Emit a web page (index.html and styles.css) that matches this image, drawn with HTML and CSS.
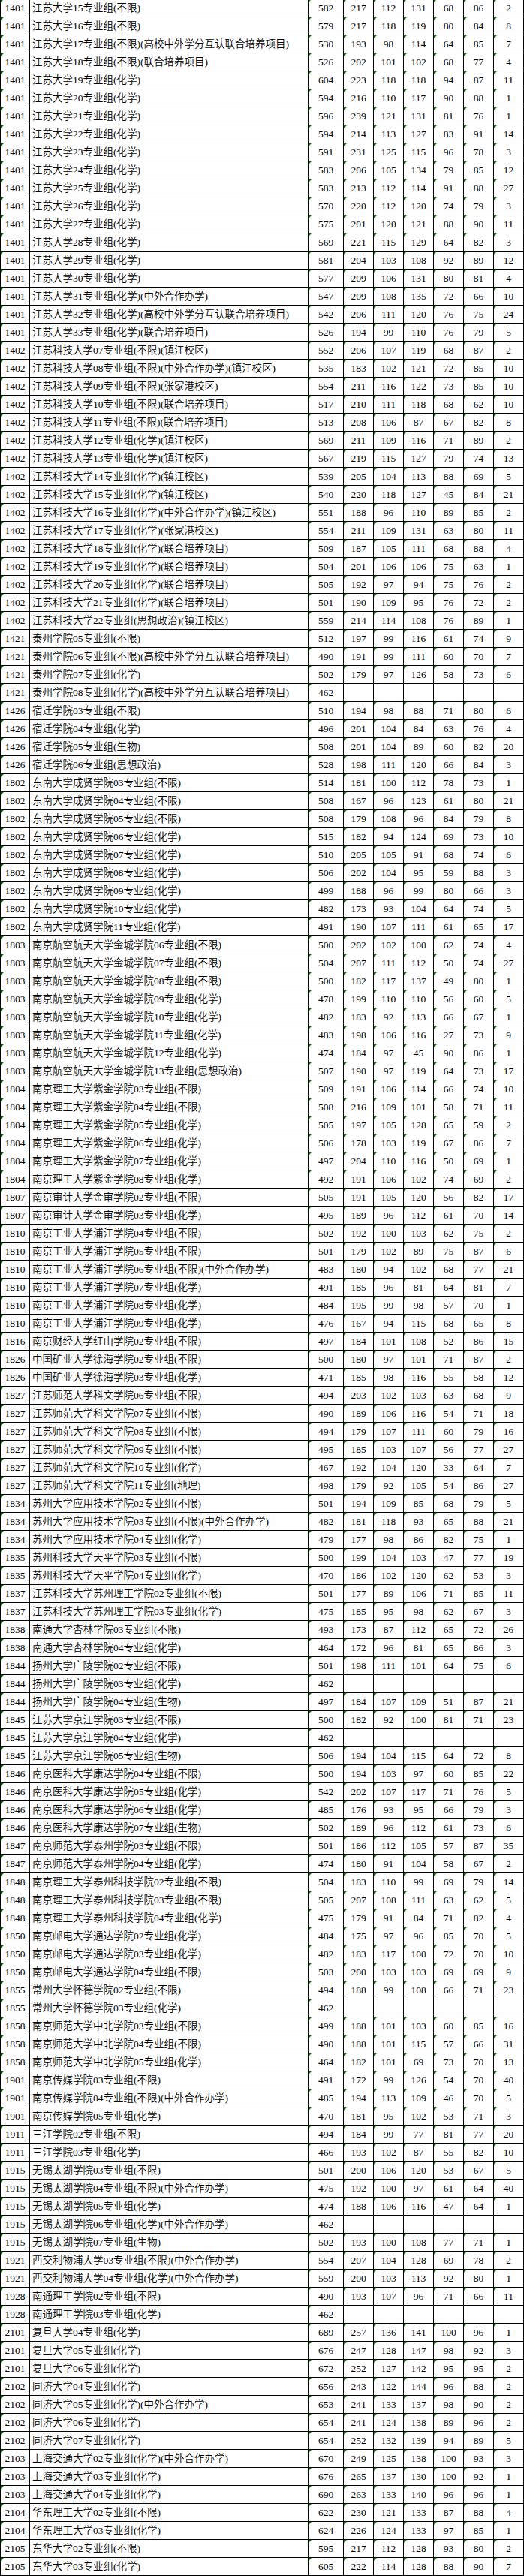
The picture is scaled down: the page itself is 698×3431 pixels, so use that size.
FILE: index.html
```html
<!DOCTYPE html>
<html lang="zh-CN">
<head>
<meta charset="utf-8">
<title>专业组投档线</title>
<link rel="stylesheet" href="styles.css">
</head>
<body>
<div class="sheet">
<div class="r"><span class="n">1401</span><span class="m">江苏大学15专业组(不限)</span><span class="n">582</span><span class="n">217</span><span class="n">112</span><span class="n">131</span><span class="n">68</span><span class="n">86</span><span class="n">2</span></div>
<div class="r"><span class="n">1401</span><span class="m">江苏大学16专业组(不限)</span><span class="n">579</span><span class="n">217</span><span class="n">118</span><span class="n">119</span><span class="n">80</span><span class="n">84</span><span class="n">8</span></div>
<div class="r"><span class="n">1401</span><span class="m">江苏大学17专业组(不限)(高校中外学分互认联合培养项目)</span><span class="n">530</span><span class="n">193</span><span class="n">98</span><span class="n">114</span><span class="n">64</span><span class="n">85</span><span class="n">7</span></div>
<div class="r"><span class="n">1401</span><span class="m">江苏大学18专业组(不限)(联合培养项目)</span><span class="n">526</span><span class="n">202</span><span class="n">101</span><span class="n">102</span><span class="n">68</span><span class="n">77</span><span class="n">4</span></div>
<div class="r"><span class="n">1401</span><span class="m">江苏大学19专业组(化学)</span><span class="n">604</span><span class="n">223</span><span class="n">118</span><span class="n">118</span><span class="n">94</span><span class="n">87</span><span class="n">11</span></div>
<div class="r"><span class="n">1401</span><span class="m">江苏大学20专业组(化学)</span><span class="n">594</span><span class="n">216</span><span class="n">110</span><span class="n">117</span><span class="n">90</span><span class="n">88</span><span class="n">1</span></div>
<div class="r"><span class="n">1401</span><span class="m">江苏大学21专业组(化学)</span><span class="n">596</span><span class="n">239</span><span class="n">121</span><span class="n">131</span><span class="n">81</span><span class="n">76</span><span class="n">1</span></div>
<div class="r"><span class="n">1401</span><span class="m">江苏大学22专业组(化学)</span><span class="n">594</span><span class="n">214</span><span class="n">113</span><span class="n">127</span><span class="n">83</span><span class="n">91</span><span class="n">14</span></div>
<div class="r"><span class="n">1401</span><span class="m">江苏大学23专业组(化学)</span><span class="n">591</span><span class="n">231</span><span class="n">125</span><span class="n">115</span><span class="n">96</span><span class="n">78</span><span class="n">3</span></div>
<div class="r"><span class="n">1401</span><span class="m">江苏大学24专业组(化学)</span><span class="n">583</span><span class="n">206</span><span class="n">105</span><span class="n">134</span><span class="n">79</span><span class="n">85</span><span class="n">12</span></div>
<div class="r"><span class="n">1401</span><span class="m">江苏大学25专业组(化学)</span><span class="n">583</span><span class="n">213</span><span class="n">112</span><span class="n">114</span><span class="n">91</span><span class="n">88</span><span class="n">27</span></div>
<div class="r"><span class="n">1401</span><span class="m">江苏大学26专业组(化学)</span><span class="n">570</span><span class="n">220</span><span class="n">112</span><span class="n">120</span><span class="n">74</span><span class="n">79</span><span class="n">3</span></div>
<div class="r"><span class="n">1401</span><span class="m">江苏大学27专业组(化学)</span><span class="n">575</span><span class="n">201</span><span class="n">120</span><span class="n">121</span><span class="n">88</span><span class="n">90</span><span class="n">11</span></div>
<div class="r"><span class="n">1401</span><span class="m">江苏大学28专业组(化学)</span><span class="n">569</span><span class="n">221</span><span class="n">115</span><span class="n">129</span><span class="n">64</span><span class="n">82</span><span class="n">3</span></div>
<div class="r"><span class="n">1401</span><span class="m">江苏大学29专业组(化学)</span><span class="n">581</span><span class="n">204</span><span class="n">103</span><span class="n">108</span><span class="n">92</span><span class="n">89</span><span class="n">12</span></div>
<div class="r"><span class="n">1401</span><span class="m">江苏大学30专业组(化学)</span><span class="n">577</span><span class="n">209</span><span class="n">106</span><span class="n">131</span><span class="n">80</span><span class="n">81</span><span class="n">4</span></div>
<div class="r"><span class="n">1401</span><span class="m">江苏大学31专业组(化学)(中外合作办学)</span><span class="n">547</span><span class="n">209</span><span class="n">108</span><span class="n">135</span><span class="n">72</span><span class="n">66</span><span class="n">10</span></div>
<div class="r"><span class="n">1401</span><span class="m">江苏大学32专业组(化学)(高校中外学分互认联合培养项目)</span><span class="n">542</span><span class="n">206</span><span class="n">111</span><span class="n">120</span><span class="n">76</span><span class="n">75</span><span class="n">24</span></div>
<div class="r"><span class="n">1401</span><span class="m">江苏大学33专业组(化学)(联合培养项目)</span><span class="n">526</span><span class="n">194</span><span class="n">99</span><span class="n">110</span><span class="n">76</span><span class="n">79</span><span class="n">5</span></div>
<div class="r"><span class="n">1402</span><span class="m">江苏科技大学07专业组(不限)(镇江校区)</span><span class="n">552</span><span class="n">206</span><span class="n">107</span><span class="n">119</span><span class="n">68</span><span class="n">87</span><span class="n">2</span></div>
<div class="r"><span class="n">1402</span><span class="m">江苏科技大学08专业组(不限)(中外合作办学)(镇江校区)</span><span class="n">535</span><span class="n">183</span><span class="n">102</span><span class="n">121</span><span class="n">72</span><span class="n">85</span><span class="n">10</span></div>
<div class="r"><span class="n">1402</span><span class="m">江苏科技大学09专业组(不限)(张家港校区)</span><span class="n">554</span><span class="n">211</span><span class="n">116</span><span class="n">122</span><span class="n">73</span><span class="n">85</span><span class="n">10</span></div>
<div class="r"><span class="n">1402</span><span class="m">江苏科技大学10专业组(不限)(联合培养项目)</span><span class="n">517</span><span class="n">210</span><span class="n">111</span><span class="n">118</span><span class="n">68</span><span class="n">62</span><span class="n">10</span></div>
<div class="r"><span class="n">1402</span><span class="m">江苏科技大学11专业组(不限)(联合培养项目)</span><span class="n">513</span><span class="n">208</span><span class="n">106</span><span class="n">87</span><span class="n">67</span><span class="n">82</span><span class="n">8</span></div>
<div class="r"><span class="n">1402</span><span class="m">江苏科技大学12专业组(化学)(镇江校区)</span><span class="n">569</span><span class="n">211</span><span class="n">109</span><span class="n">116</span><span class="n">71</span><span class="n">89</span><span class="n">2</span></div>
<div class="r"><span class="n">1402</span><span class="m">江苏科技大学13专业组(化学)(镇江校区)</span><span class="n">567</span><span class="n">219</span><span class="n">115</span><span class="n">127</span><span class="n">79</span><span class="n">74</span><span class="n">13</span></div>
<div class="r"><span class="n">1402</span><span class="m">江苏科技大学14专业组(化学)(镇江校区)</span><span class="n">539</span><span class="n">205</span><span class="n">104</span><span class="n">113</span><span class="n">88</span><span class="n">69</span><span class="n">5</span></div>
<div class="r"><span class="n">1402</span><span class="m">江苏科技大学15专业组(化学)(镇江校区)</span><span class="n">540</span><span class="n">220</span><span class="n">118</span><span class="n">127</span><span class="n">45</span><span class="n">84</span><span class="n">21</span></div>
<div class="r"><span class="n">1402</span><span class="m">江苏科技大学16专业组(化学)(中外合作办学)(镇江校区)</span><span class="n">551</span><span class="n">188</span><span class="n">96</span><span class="n">110</span><span class="n">89</span><span class="n">85</span><span class="n">2</span></div>
<div class="r"><span class="n">1402</span><span class="m">江苏科技大学17专业组(化学)(张家港校区)</span><span class="n">554</span><span class="n">211</span><span class="n">109</span><span class="n">131</span><span class="n">63</span><span class="n">80</span><span class="n">11</span></div>
<div class="r"><span class="n">1402</span><span class="m">江苏科技大学18专业组(化学)(联合培养项目)</span><span class="n">509</span><span class="n">187</span><span class="n">105</span><span class="n">111</span><span class="n">68</span><span class="n">88</span><span class="n">4</span></div>
<div class="r"><span class="n">1402</span><span class="m">江苏科技大学19专业组(化学)(联合培养项目)</span><span class="n">504</span><span class="n">201</span><span class="n">106</span><span class="n">106</span><span class="n">75</span><span class="n">63</span><span class="n">1</span></div>
<div class="r"><span class="n">1402</span><span class="m">江苏科技大学20专业组(化学)(联合培养项目)</span><span class="n">505</span><span class="n">192</span><span class="n">97</span><span class="n">94</span><span class="n">75</span><span class="n">76</span><span class="n">2</span></div>
<div class="r"><span class="n">1402</span><span class="m">江苏科技大学21专业组(化学)(联合培养项目)</span><span class="n">501</span><span class="n">190</span><span class="n">109</span><span class="n">95</span><span class="n">76</span><span class="n">72</span><span class="n">2</span></div>
<div class="r"><span class="n">1402</span><span class="m">江苏科技大学22专业组(思想政治)(镇江校区)</span><span class="n">559</span><span class="n">214</span><span class="n">114</span><span class="n">108</span><span class="n">76</span><span class="n">89</span><span class="n">1</span></div>
<div class="r"><span class="n">1421</span><span class="m">泰州学院05专业组(不限)</span><span class="n">512</span><span class="n">197</span><span class="n">99</span><span class="n">116</span><span class="n">61</span><span class="n">74</span><span class="n">9</span></div>
<div class="r"><span class="n">1421</span><span class="m">泰州学院06专业组(不限)(高校中外学分互认联合培养项目)</span><span class="n">490</span><span class="n">191</span><span class="n">99</span><span class="n">111</span><span class="n">60</span><span class="n">70</span><span class="n">7</span></div>
<div class="r"><span class="n">1421</span><span class="m">泰州学院07专业组(化学)</span><span class="n">502</span><span class="n">179</span><span class="n">97</span><span class="n">126</span><span class="n">58</span><span class="n">73</span><span class="n">6</span></div>
<div class="r"><span class="n">1421</span><span class="m">泰州学院08专业组(化学)(高校中外学分互认联合培养项目)</span><span class="n">462</span><span></span><span></span><span></span><span></span><span></span><span></span></div>
<div class="r"><span class="n">1426</span><span class="m">宿迁学院03专业组(不限)</span><span class="n">510</span><span class="n">194</span><span class="n">98</span><span class="n">88</span><span class="n">71</span><span class="n">80</span><span class="n">6</span></div>
<div class="r"><span class="n">1426</span><span class="m">宿迁学院04专业组(化学)</span><span class="n">496</span><span class="n">201</span><span class="n">104</span><span class="n">84</span><span class="n">63</span><span class="n">76</span><span class="n">4</span></div>
<div class="r"><span class="n">1426</span><span class="m">宿迁学院05专业组(生物)</span><span class="n">508</span><span class="n">201</span><span class="n">104</span><span class="n">89</span><span class="n">60</span><span class="n">82</span><span class="n">20</span></div>
<div class="r"><span class="n">1426</span><span class="m">宿迁学院06专业组(思想政治)</span><span class="n">528</span><span class="n">198</span><span class="n">111</span><span class="n">120</span><span class="n">66</span><span class="n">84</span><span class="n">3</span></div>
<div class="r"><span class="n">1802</span><span class="m">东南大学成贤学院03专业组(不限)</span><span class="n">514</span><span class="n">181</span><span class="n">100</span><span class="n">112</span><span class="n">78</span><span class="n">73</span><span class="n">1</span></div>
<div class="r"><span class="n">1802</span><span class="m">东南大学成贤学院04专业组(不限)</span><span class="n">508</span><span class="n">167</span><span class="n">96</span><span class="n">123</span><span class="n">61</span><span class="n">80</span><span class="n">21</span></div>
<div class="r"><span class="n">1802</span><span class="m">东南大学成贤学院05专业组(不限)</span><span class="n">508</span><span class="n">179</span><span class="n">108</span><span class="n">96</span><span class="n">84</span><span class="n">79</span><span class="n">8</span></div>
<div class="r"><span class="n">1802</span><span class="m">东南大学成贤学院06专业组(化学)</span><span class="n">515</span><span class="n">182</span><span class="n">94</span><span class="n">124</span><span class="n">69</span><span class="n">73</span><span class="n">10</span></div>
<div class="r"><span class="n">1802</span><span class="m">东南大学成贤学院07专业组(化学)</span><span class="n">510</span><span class="n">205</span><span class="n">105</span><span class="n">91</span><span class="n">68</span><span class="n">74</span><span class="n">6</span></div>
<div class="r"><span class="n">1802</span><span class="m">东南大学成贤学院08专业组(化学)</span><span class="n">506</span><span class="n">202</span><span class="n">104</span><span class="n">95</span><span class="n">59</span><span class="n">88</span><span class="n">3</span></div>
<div class="r"><span class="n">1802</span><span class="m">东南大学成贤学院09专业组(化学)</span><span class="n">499</span><span class="n">188</span><span class="n">96</span><span class="n">99</span><span class="n">80</span><span class="n">66</span><span class="n">3</span></div>
<div class="r"><span class="n">1802</span><span class="m">东南大学成贤学院10专业组(化学)</span><span class="n">482</span><span class="n">173</span><span class="n">93</span><span class="n">104</span><span class="n">64</span><span class="n">74</span><span class="n">5</span></div>
<div class="r"><span class="n">1802</span><span class="m">东南大学成贤学院11专业组(化学)</span><span class="n">491</span><span class="n">190</span><span class="n">107</span><span class="n">111</span><span class="n">61</span><span class="n">65</span><span class="n">17</span></div>
<div class="r"><span class="n">1803</span><span class="m">南京航空航天大学金城学院06专业组(不限)</span><span class="n">500</span><span class="n">202</span><span class="n">102</span><span class="n">100</span><span class="n">62</span><span class="n">74</span><span class="n">4</span></div>
<div class="r"><span class="n">1803</span><span class="m">南京航空航天大学金城学院07专业组(不限)</span><span class="n">504</span><span class="n">207</span><span class="n">111</span><span class="n">112</span><span class="n">50</span><span class="n">74</span><span class="n">27</span></div>
<div class="r"><span class="n">1803</span><span class="m">南京航空航天大学金城学院08专业组(不限)</span><span class="n">500</span><span class="n">182</span><span class="n">117</span><span class="n">137</span><span class="n">49</span><span class="n">80</span><span class="n">1</span></div>
<div class="r"><span class="n">1803</span><span class="m">南京航空航天大学金城学院09专业组(化学)</span><span class="n">478</span><span class="n">199</span><span class="n">110</span><span class="n">110</span><span class="n">56</span><span class="n">60</span><span class="n">5</span></div>
<div class="r"><span class="n">1803</span><span class="m">南京航空航天大学金城学院10专业组(化学)</span><span class="n">482</span><span class="n">183</span><span class="n">92</span><span class="n">113</span><span class="n">66</span><span class="n">67</span><span class="n">1</span></div>
<div class="r"><span class="n">1803</span><span class="m">南京航空航天大学金城学院11专业组(化学)</span><span class="n">483</span><span class="n">198</span><span class="n">106</span><span class="n">116</span><span class="n">27</span><span class="n">73</span><span class="n">9</span></div>
<div class="r"><span class="n">1803</span><span class="m">南京航空航天大学金城学院12专业组(化学)</span><span class="n">474</span><span class="n">184</span><span class="n">97</span><span class="n">45</span><span class="n">90</span><span class="n">86</span><span class="n">1</span></div>
<div class="r"><span class="n">1803</span><span class="m">南京航空航天大学金城学院13专业组(思想政治)</span><span class="n">507</span><span class="n">190</span><span class="n">97</span><span class="n">119</span><span class="n">64</span><span class="n">73</span><span class="n">17</span></div>
<div class="r"><span class="n">1804</span><span class="m">南京理工大学紫金学院03专业组(不限)</span><span class="n">509</span><span class="n">191</span><span class="n">106</span><span class="n">114</span><span class="n">66</span><span class="n">74</span><span class="n">10</span></div>
<div class="r"><span class="n">1804</span><span class="m">南京理工大学紫金学院04专业组(不限)</span><span class="n">508</span><span class="n">216</span><span class="n">109</span><span class="n">101</span><span class="n">58</span><span class="n">71</span><span class="n">11</span></div>
<div class="r"><span class="n">1804</span><span class="m">南京理工大学紫金学院05专业组(化学)</span><span class="n">505</span><span class="n">197</span><span class="n">105</span><span class="n">128</span><span class="n">65</span><span class="n">59</span><span class="n">2</span></div>
<div class="r"><span class="n">1804</span><span class="m">南京理工大学紫金学院06专业组(化学)</span><span class="n">506</span><span class="n">178</span><span class="n">103</span><span class="n">119</span><span class="n">67</span><span class="n">86</span><span class="n">7</span></div>
<div class="r"><span class="n">1804</span><span class="m">南京理工大学紫金学院07专业组(化学)</span><span class="n">497</span><span class="n">204</span><span class="n">110</span><span class="n">116</span><span class="n">50</span><span class="n">69</span><span class="n">1</span></div>
<div class="r"><span class="n">1804</span><span class="m">南京理工大学紫金学院08专业组(化学)</span><span class="n">492</span><span class="n">191</span><span class="n">106</span><span class="n">102</span><span class="n">74</span><span class="n">69</span><span class="n">2</span></div>
<div class="r"><span class="n">1807</span><span class="m">南京审计大学金审学院02专业组(不限)</span><span class="n">505</span><span class="n">191</span><span class="n">105</span><span class="n">120</span><span class="n">56</span><span class="n">82</span><span class="n">17</span></div>
<div class="r"><span class="n">1807</span><span class="m">南京审计大学金审学院03专业组(化学)</span><span class="n">495</span><span class="n">189</span><span class="n">96</span><span class="n">112</span><span class="n">61</span><span class="n">70</span><span class="n">14</span></div>
<div class="r"><span class="n">1810</span><span class="m">南京工业大学浦江学院04专业组(不限)</span><span class="n">502</span><span class="n">192</span><span class="n">100</span><span class="n">103</span><span class="n">62</span><span class="n">75</span><span class="n">2</span></div>
<div class="r"><span class="n">1810</span><span class="m">南京工业大学浦江学院05专业组(不限)</span><span class="n">501</span><span class="n">179</span><span class="n">102</span><span class="n">89</span><span class="n">75</span><span class="n">87</span><span class="n">6</span></div>
<div class="r"><span class="n">1810</span><span class="m">南京工业大学浦江学院06专业组(不限)(中外合作办学)</span><span class="n">483</span><span class="n">180</span><span class="n">94</span><span class="n">102</span><span class="n">68</span><span class="n">77</span><span class="n">21</span></div>
<div class="r"><span class="n">1810</span><span class="m">南京工业大学浦江学院07专业组(化学)</span><span class="n">491</span><span class="n">185</span><span class="n">96</span><span class="n">81</span><span class="n">64</span><span class="n">81</span><span class="n">7</span></div>
<div class="r"><span class="n">1810</span><span class="m">南京工业大学浦江学院08专业组(化学)</span><span class="n">484</span><span class="n">195</span><span class="n">99</span><span class="n">98</span><span class="n">57</span><span class="n">70</span><span class="n">1</span></div>
<div class="r"><span class="n">1810</span><span class="m">南京工业大学浦江学院09专业组(化学)</span><span class="n">476</span><span class="n">167</span><span class="n">94</span><span class="n">115</span><span class="n">68</span><span class="n">65</span><span class="n">8</span></div>
<div class="r"><span class="n">1816</span><span class="m">南京财经大学红山学院02专业组(不限)</span><span class="n">497</span><span class="n">184</span><span class="n">101</span><span class="n">108</span><span class="n">52</span><span class="n">86</span><span class="n">15</span></div>
<div class="r"><span class="n">1826</span><span class="m">中国矿业大学徐海学院02专业组(不限)</span><span class="n">500</span><span class="n">180</span><span class="n">97</span><span class="n">101</span><span class="n">71</span><span class="n">87</span><span class="n">2</span></div>
<div class="r"><span class="n">1826</span><span class="m">中国矿业大学徐海学院03专业组(化学)</span><span class="n">471</span><span class="n">185</span><span class="n">98</span><span class="n">116</span><span class="n">55</span><span class="n">58</span><span class="n">12</span></div>
<div class="r"><span class="n">1827</span><span class="m">江苏师范大学科文学院06专业组(不限)</span><span class="n">494</span><span class="n">203</span><span class="n">102</span><span class="n">103</span><span class="n">63</span><span class="n">68</span><span class="n">9</span></div>
<div class="r"><span class="n">1827</span><span class="m">江苏师范大学科文学院07专业组(不限)</span><span class="n">490</span><span class="n">189</span><span class="n">106</span><span class="n">116</span><span class="n">54</span><span class="n">71</span><span class="n">18</span></div>
<div class="r"><span class="n">1827</span><span class="m">江苏师范大学科文学院08专业组(不限)</span><span class="n">494</span><span class="n">179</span><span class="n">107</span><span class="n">111</span><span class="n">60</span><span class="n">79</span><span class="n">16</span></div>
<div class="r"><span class="n">1827</span><span class="m">江苏师范大学科文学院09专业组(不限)</span><span class="n">495</span><span class="n">185</span><span class="n">103</span><span class="n">107</span><span class="n">56</span><span class="n">77</span><span class="n">27</span></div>
<div class="r"><span class="n">1827</span><span class="m">江苏师范大学科文学院10专业组(化学)</span><span class="n">467</span><span class="n">192</span><span class="n">104</span><span class="n">120</span><span class="n">33</span><span class="n">64</span><span class="n">7</span></div>
<div class="r"><span class="n">1827</span><span class="m">江苏师范大学科文学院11专业组(地理)</span><span class="n">498</span><span class="n">179</span><span class="n">92</span><span class="n">105</span><span class="n">54</span><span class="n">86</span><span class="n">27</span></div>
<div class="r"><span class="n">1834</span><span class="m">苏州大学应用技术学院02专业组(不限)</span><span class="n">501</span><span class="n">194</span><span class="n">109</span><span class="n">85</span><span class="n">68</span><span class="n">79</span><span class="n">5</span></div>
<div class="r"><span class="n">1834</span><span class="m">苏州大学应用技术学院03专业组(不限)(中外合作办学)</span><span class="n">482</span><span class="n">181</span><span class="n">118</span><span class="n">93</span><span class="n">65</span><span class="n">88</span><span class="n">21</span></div>
<div class="r"><span class="n">1834</span><span class="m">苏州大学应用技术学院04专业组(化学)</span><span class="n">479</span><span class="n">177</span><span class="n">98</span><span class="n">86</span><span class="n">82</span><span class="n">75</span><span class="n">1</span></div>
<div class="r"><span class="n">1835</span><span class="m">苏州科技大学天平学院03专业组(不限)</span><span class="n">500</span><span class="n">199</span><span class="n">104</span><span class="n">103</span><span class="n">47</span><span class="n">77</span><span class="n">19</span></div>
<div class="r"><span class="n">1835</span><span class="m">苏州科技大学天平学院04专业组(化学)</span><span class="n">470</span><span class="n">186</span><span class="n">102</span><span class="n">120</span><span class="n">62</span><span class="n">53</span><span class="n">3</span></div>
<div class="r"><span class="n">1837</span><span class="m">江苏科技大学苏州理工学院02专业组(不限)</span><span class="n">501</span><span class="n">177</span><span class="n">89</span><span class="n">106</span><span class="n">71</span><span class="n">85</span><span class="n">11</span></div>
<div class="r"><span class="n">1837</span><span class="m">江苏科技大学苏州理工学院03专业组(化学)</span><span class="n">475</span><span class="n">185</span><span class="n">95</span><span class="n">98</span><span class="n">62</span><span class="n">67</span><span class="n">3</span></div>
<div class="r"><span class="n">1838</span><span class="m">南通大学杏林学院03专业组(不限)</span><span class="n">493</span><span class="n">173</span><span class="n">87</span><span class="n">112</span><span class="n">65</span><span class="n">72</span><span class="n">26</span></div>
<div class="r"><span class="n">1838</span><span class="m">南通大学杏林学院04专业组(化学)</span><span class="n">464</span><span class="n">172</span><span class="n">96</span><span class="n">81</span><span class="n">65</span><span class="n">86</span><span class="n">3</span></div>
<div class="r"><span class="n">1844</span><span class="m">扬州大学广陵学院02专业组(不限)</span><span class="n">501</span><span class="n">198</span><span class="n">111</span><span class="n">101</span><span class="n">64</span><span class="n">75</span><span class="n">6</span></div>
<div class="r"><span class="n">1844</span><span class="m">扬州大学广陵学院03专业组(化学)</span><span class="n">462</span><span></span><span></span><span></span><span></span><span></span><span></span></div>
<div class="r"><span class="n">1844</span><span class="m">扬州大学广陵学院04专业组(生物)</span><span class="n">497</span><span class="n">184</span><span class="n">107</span><span class="n">109</span><span class="n">51</span><span class="n">87</span><span class="n">21</span></div>
<div class="r"><span class="n">1845</span><span class="m">江苏大学京江学院03专业组(不限)</span><span class="n">500</span><span class="n">182</span><span class="n">92</span><span class="n">100</span><span class="n">81</span><span class="n">71</span><span class="n">23</span></div>
<div class="r"><span class="n">1845</span><span class="m">江苏大学京江学院04专业组(化学)</span><span class="n">462</span><span></span><span></span><span></span><span></span><span></span><span></span></div>
<div class="r"><span class="n">1845</span><span class="m">江苏大学京江学院05专业组(生物)</span><span class="n">506</span><span class="n">194</span><span class="n">104</span><span class="n">115</span><span class="n">64</span><span class="n">72</span><span class="n">8</span></div>
<div class="r"><span class="n">1846</span><span class="m">南京医科大学康达学院04专业组(不限)</span><span class="n">500</span><span class="n">194</span><span class="n">103</span><span class="n">97</span><span class="n">60</span><span class="n">85</span><span class="n">22</span></div>
<div class="r"><span class="n">1846</span><span class="m">南京医科大学康达学院05专业组(化学)</span><span class="n">542</span><span class="n">202</span><span class="n">107</span><span class="n">117</span><span class="n">71</span><span class="n">76</span><span class="n">5</span></div>
<div class="r"><span class="n">1846</span><span class="m">南京医科大学康达学院06专业组(化学)</span><span class="n">485</span><span class="n">176</span><span class="n">93</span><span class="n">95</span><span class="n">66</span><span class="n">79</span><span class="n">3</span></div>
<div class="r"><span class="n">1846</span><span class="m">南京医科大学康达学院07专业组(生物)</span><span class="n">502</span><span class="n">189</span><span class="n">96</span><span class="n">112</span><span class="n">61</span><span class="n">73</span><span class="n">6</span></div>
<div class="r"><span class="n">1847</span><span class="m">南京师范大学泰州学院03专业组(不限)</span><span class="n">501</span><span class="n">186</span><span class="n">112</span><span class="n">105</span><span class="n">57</span><span class="n">87</span><span class="n">35</span></div>
<div class="r"><span class="n">1847</span><span class="m">南京师范大学泰州学院04专业组(化学)</span><span class="n">474</span><span class="n">180</span><span class="n">91</span><span class="n">104</span><span class="n">58</span><span class="n">67</span><span class="n">2</span></div>
<div class="r"><span class="n">1848</span><span class="m">南京理工大学泰州科技学院02专业组(不限)</span><span class="n">504</span><span class="n">183</span><span class="n">110</span><span class="n">99</span><span class="n">69</span><span class="n">79</span><span class="n">14</span></div>
<div class="r"><span class="n">1848</span><span class="m">南京理工大学泰州科技学院03专业组(不限)</span><span class="n">505</span><span class="n">207</span><span class="n">108</span><span class="n">111</span><span class="n">63</span><span class="n">62</span><span class="n">5</span></div>
<div class="r"><span class="n">1848</span><span class="m">南京理工大学泰州科技学院04专业组(化学)</span><span class="n">475</span><span class="n">179</span><span class="n">91</span><span class="n">84</span><span class="n">71</span><span class="n">82</span><span class="n">4</span></div>
<div class="r"><span class="n">1850</span><span class="m">南京邮电大学通达学院02专业组(化学)</span><span class="n">484</span><span class="n">175</span><span class="n">97</span><span class="n">96</span><span class="n">85</span><span class="n">70</span><span class="n">5</span></div>
<div class="r"><span class="n">1850</span><span class="m">南京邮电大学通达学院03专业组(化学)</span><span class="n">482</span><span class="n">183</span><span class="n">117</span><span class="n">100</span><span class="n">72</span><span class="n">70</span><span class="n">10</span></div>
<div class="r"><span class="n">1850</span><span class="m">南京邮电大学通达学院04专业组(不限)</span><span class="n">503</span><span class="n">200</span><span class="n">103</span><span class="n">103</span><span class="n">69</span><span class="n">69</span><span class="n">9</span></div>
<div class="r"><span class="n">1855</span><span class="m">常州大学怀德学院02专业组(不限)</span><span class="n">494</span><span class="n">188</span><span class="n">99</span><span class="n">108</span><span class="n">66</span><span class="n">71</span><span class="n">23</span></div>
<div class="r"><span class="n">1855</span><span class="m">常州大学怀德学院03专业组(化学)</span><span class="n">462</span><span></span><span></span><span></span><span></span><span></span><span></span></div>
<div class="r"><span class="n">1858</span><span class="m">南京师范大学中北学院03专业组(不限)</span><span class="n">499</span><span class="n">188</span><span class="n">101</span><span class="n">103</span><span class="n">60</span><span class="n">85</span><span class="n">16</span></div>
<div class="r"><span class="n">1858</span><span class="m">南京师范大学中北学院04专业组(不限)</span><span class="n">490</span><span class="n">188</span><span class="n">101</span><span class="n">115</span><span class="n">57</span><span class="n">66</span><span class="n">31</span></div>
<div class="r"><span class="n">1858</span><span class="m">南京师范大学中北学院05专业组(化学)</span><span class="n">464</span><span class="n">182</span><span class="n">101</span><span class="n">69</span><span class="n">73</span><span class="n">70</span><span class="n">13</span></div>
<div class="r"><span class="n">1901</span><span class="m">南京传媒学院03专业组(不限)</span><span class="n">491</span><span class="n">172</span><span class="n">99</span><span class="n">126</span><span class="n">54</span><span class="n">70</span><span class="n">40</span></div>
<div class="r"><span class="n">1901</span><span class="m">南京传媒学院04专业组(不限)(中外合作办学)</span><span class="n">485</span><span class="n">194</span><span class="n">113</span><span class="n">109</span><span class="n">46</span><span class="n">70</span><span class="n">5</span></div>
<div class="r"><span class="n">1901</span><span class="m">南京传媒学院05专业组(化学)</span><span class="n">470</span><span class="n">181</span><span class="n">95</span><span class="n">102</span><span class="n">53</span><span class="n">71</span><span class="n">3</span></div>
<div class="r"><span class="n">1911</span><span class="m">三江学院02专业组(不限)</span><span class="n">494</span><span class="n">184</span><span class="n">99</span><span class="n">77</span><span class="n">81</span><span class="n">77</span><span class="n">20</span></div>
<div class="r"><span class="n">1911</span><span class="m">三江学院03专业组(化学)</span><span class="n">466</span><span class="n">193</span><span class="n">102</span><span class="n">87</span><span class="n">55</span><span class="n">82</span><span class="n">10</span></div>
<div class="r"><span class="n">1915</span><span class="m">无锡太湖学院03专业组(不限)</span><span class="n">501</span><span class="n">200</span><span class="n">106</span><span class="n">120</span><span class="n">53</span><span class="n">67</span><span class="n">5</span></div>
<div class="r"><span class="n">1915</span><span class="m">无锡太湖学院04专业组(不限)(中外合作办学)</span><span class="n">475</span><span class="n">192</span><span class="n">100</span><span class="n">97</span><span class="n">61</span><span class="n">64</span><span class="n">40</span></div>
<div class="r"><span class="n">1915</span><span class="m">无锡太湖学院05专业组(化学)</span><span class="n">474</span><span class="n">188</span><span class="n">106</span><span class="n">116</span><span class="n">47</span><span class="n">64</span><span class="n">1</span></div>
<div class="r"><span class="n">1915</span><span class="m">无锡太湖学院06专业组(化学)(中外合作办学)</span><span class="n">462</span><span></span><span></span><span></span><span></span><span></span><span></span></div>
<div class="r"><span class="n">1915</span><span class="m">无锡太湖学院07专业组(生物)</span><span class="n">502</span><span class="n">193</span><span class="n">100</span><span class="n">108</span><span class="n">77</span><span class="n">71</span><span class="n">1</span></div>
<div class="r"><span class="n">1921</span><span class="m">西交利物浦大学03专业组(不限)(中外合作办学)</span><span class="n">554</span><span class="n">207</span><span class="n">104</span><span class="n">128</span><span class="n">69</span><span class="n">78</span><span class="n">2</span></div>
<div class="r"><span class="n">1921</span><span class="m">西交利物浦大学04专业组(化学)(中外合作办学)</span><span class="n">559</span><span class="n">200</span><span class="n">103</span><span class="n">113</span><span class="n">92</span><span class="n">80</span><span class="n">1</span></div>
<div class="r"><span class="n">1928</span><span class="m">南通理工学院02专业组(不限)</span><span class="n">490</span><span class="n">193</span><span class="n">107</span><span class="n">96</span><span class="n">71</span><span class="n">66</span><span class="n">11</span></div>
<div class="r"><span class="n">1928</span><span class="m">南通理工学院03专业组(化学)</span><span class="n">462</span><span></span><span></span><span></span><span></span><span></span><span></span></div>
<div class="r"><span class="n">2101</span><span class="m">复旦大学04专业组(化学)</span><span class="n">689</span><span class="n">257</span><span class="n">136</span><span class="n">141</span><span class="n">100</span><span class="n">96</span><span class="n">1</span></div>
<div class="r"><span class="n">2101</span><span class="m">复旦大学05专业组(化学)</span><span class="n">676</span><span class="n">247</span><span class="n">128</span><span class="n">147</span><span class="n">98</span><span class="n">92</span><span class="n">3</span></div>
<div class="r"><span class="n">2101</span><span class="m">复旦大学06专业组(化学)</span><span class="n">672</span><span class="n">252</span><span class="n">127</span><span class="n">142</span><span class="n">95</span><span class="n">95</span><span class="n">2</span></div>
<div class="r"><span class="n">2102</span><span class="m">同济大学04专业组(化学)</span><span class="n">656</span><span class="n">243</span><span class="n">122</span><span class="n">144</span><span class="n">96</span><span class="n">88</span><span class="n">2</span></div>
<div class="r"><span class="n">2102</span><span class="m">同济大学05专业组(化学)(中外合作办学)</span><span class="n">653</span><span class="n">241</span><span class="n">133</span><span class="n">137</span><span class="n">98</span><span class="n">90</span><span class="n">2</span></div>
<div class="r"><span class="n">2102</span><span class="m">同济大学06专业组(化学)</span><span class="n">654</span><span class="n">241</span><span class="n">124</span><span class="n">138</span><span class="n">89</span><span class="n">96</span><span class="n">2</span></div>
<div class="r"><span class="n">2102</span><span class="m">同济大学07专业组(化学)</span><span class="n">654</span><span class="n">252</span><span class="n">132</span><span class="n">139</span><span class="n">94</span><span class="n">89</span><span class="n">5</span></div>
<div class="r"><span class="n">2103</span><span class="m">上海交通大学02专业组(化学)(中外合作办学)</span><span class="n">670</span><span class="n">249</span><span class="n">125</span><span class="n">138</span><span class="n">100</span><span class="n">93</span><span class="n">3</span></div>
<div class="r"><span class="n">2103</span><span class="m">上海交通大学03专业组(化学)</span><span class="n">676</span><span class="n">265</span><span class="n">137</span><span class="n">130</span><span class="n">100</span><span class="n">92</span><span class="n">1</span></div>
<div class="r"><span class="n">2103</span><span class="m">上海交通大学04专业组(化学)</span><span class="n">690</span><span class="n">263</span><span class="n">133</span><span class="n">140</span><span class="n">96</span><span class="n">96</span><span class="n">1</span></div>
<div class="r"><span class="n">2104</span><span class="m">华东理工大学02专业组(不限)</span><span class="n">622</span><span class="n">230</span><span class="n">121</span><span class="n">133</span><span class="n">87</span><span class="n">88</span><span class="n">4</span></div>
<div class="r"><span class="n">2104</span><span class="m">华东理工大学03专业组(化学)</span><span class="n">624</span><span class="n">226</span><span class="n">124</span><span class="n">133</span><span class="n">97</span><span class="n">85</span><span class="n">1</span></div>
<div class="r"><span class="n">2105</span><span class="m">东华大学02专业组(不限)</span><span class="n">595</span><span class="n">217</span><span class="n">112</span><span class="n">128</span><span class="n">93</span><span class="n">80</span><span class="n">2</span></div>
<div class="r"><span class="n">2105</span><span class="m">东华大学03专业组(化学)</span><span class="n">605</span><span class="n">222</span><span class="n">114</span><span class="n">128</span><span class="n">88</span><span class="n">90</span><span class="n">7</span></div>
</div>
</body>
</html>
```

FILE: styles.css
```css
html, body {
  margin: 0;
  padding: 0;
  background: #ffffff;
}

body {
  font-family: "Liberation Serif", "Noto Sans CJK SC", serif;
  font-size: 13.5px;
  font-weight: 350;
  color: #000000;
}

.sheet {
  width: 698px;
  box-sizing: border-box;
  margin-top: -1px;
  border-left: 1px solid #000000;
}

.r {
  display: grid;
  grid-template-columns: 39px 371px 47px repeat(6, 40px);
  height: 24px;
}

.r span {
  position: relative;
  box-sizing: border-box;
  height: 24px;
  border-right: 1px solid #000000;
  border-bottom: 1px solid #000000;
  text-align: center;
  line-height: 23px;
  white-space: nowrap;
  overflow: hidden;
}

.r .m {
  text-align: left;
  padding-left: 3px;
}

.r .n::before {
  content: "";
  position: absolute;
  left: 0;
  top: 0;
  width: 0;
  height: 0;
  border-top: 4px solid #0b7a0b;
  border-right: 4px solid transparent;
}
```
